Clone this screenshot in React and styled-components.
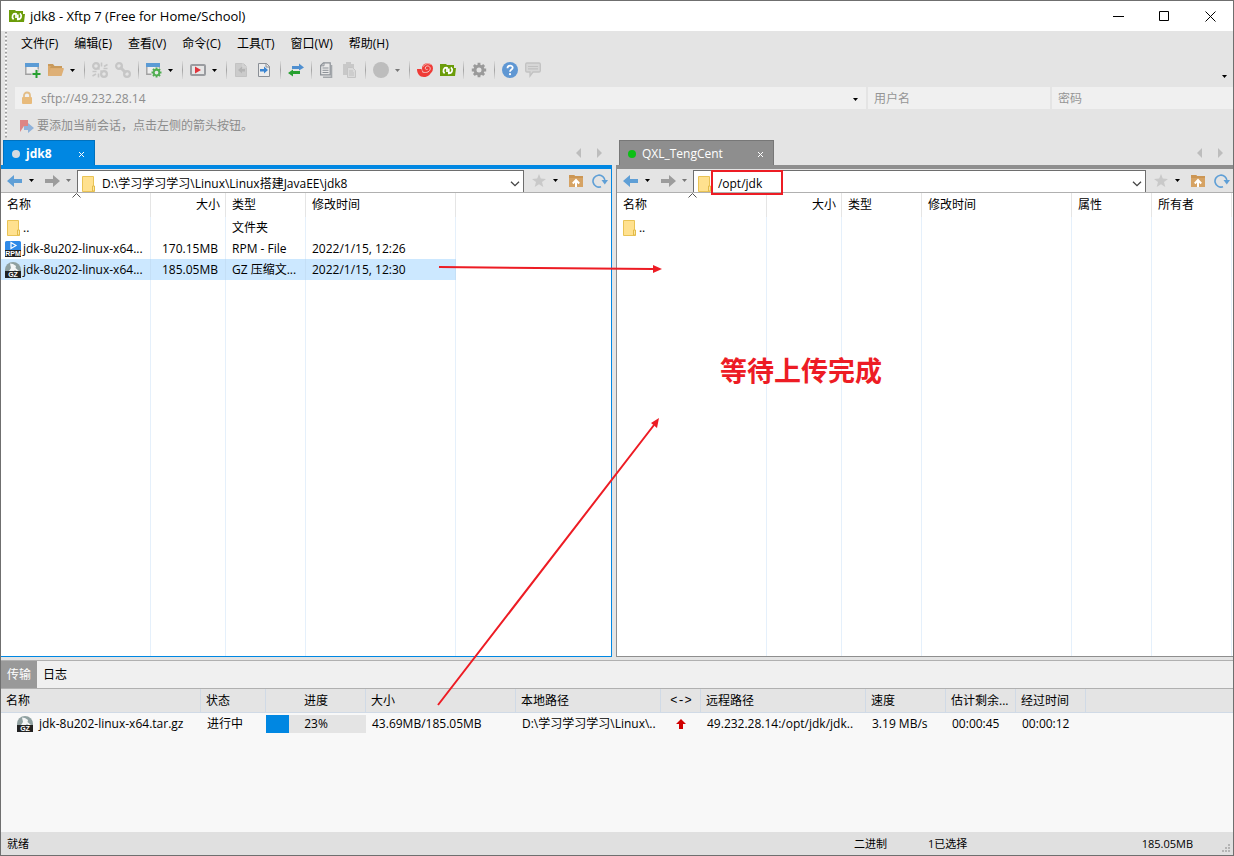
import React from "react";
import styled, { createGlobalStyle, css } from "styled-components";

const Global = createGlobalStyle`
  * { box-sizing: border-box; }
  html, body { margin: 0; padding: 0; }
  body, button, input, table {
    font-family: "Open Sans", "Noto Sans CJK SC", sans-serif;
    font-size: 12px;
    line-height: 16px;
    color: #000;
  }
  button { border: 0; padding: 0; margin: 0; background: none; }
`;

const BLUE = "#0087e2";
const GRAY = "#8e8e8e";
const RED = "#ed1c24";

const Window = styled.div`
  position: relative;
  display: flex;
  flex-direction: column;
  min-height: 100vh;
  border: 1px solid #6f6f6f;
  background: #e4e4e4;
  overflow: hidden;
`;

/* ---------- title bar ---------- */
const TitleBar = styled.header`
  display: flex;
  align-items: center;
  height: 30px;
  padding-left: 8px;
  background: #fff;
`;
const Title = styled.h1`
  flex: 1;
  margin: 0 0 0 5px;
  font-size: 13px;
  font-weight: 400;
`;
const WinButton = styled.button`
  display: flex;
  align-items: center;
  justify-content: center;
  width: 46px;
  height: 30px;
`;

/* ---------- menus and tool bar ---------- */
const Controls = styled.div`
  display: flex;
  height: 109px;
`;
const Grip = styled.div`
  width: 2px;
  margin: 1px 8px 2px 4px;
  background: repeating-linear-gradient(#9f9f9f 0 1px, #c8c8c8 1px 2px, #fff 2px 3px, #e4e4e4 3px 4px);
`;
const ControlRows = styled.div`
  flex: 1;
  min-width: 0;
  display: flex;
  flex-direction: column;
`;
const MenuBar = styled.nav`
  display: flex;
  gap: 16px;
  height: 25px;
  padding-left: 6px;
  align-items: center;
`;
const MenuItem = styled.button`
  white-space: nowrap;
`;
const ToolBar = styled.div`
  display: flex;
  align-items: center;
  height: 28px;
  margin-bottom: 3px;
  padding-left: 10px;
`;
const ToolButton = styled.button`
  display: flex;
  width: ${(p) => (p.$menu ? 16 : 23)}px;
  height: 16px;
`;
const CaretButton = styled.button`
  display: flex;
  align-items: center;
  justify-content: center;
  width: ${(p) => p.$w || 17}px;
  height: 16px;
  align-self: ${(p) => (p.$low ? "flex-end" : "center")};
`;
const ToolSep = styled.span`
  width: 1px;
  height: 18px;
  margin: 0 7px 0 ${(p) => (p.$afterMenu ? 3 : 0)}px;
  background: linear-gradient(#dcdcdc, #a4a4a4 50%, #dcdcdc);
`;
const Spacer = styled.span`
  flex: 1;
`;
const LoginRow = styled.div`
  display: grid;
  grid-template-columns: minmax(0, 1fr) 182px 181px;
  gap: 2px;
  height: 22px;
`;
const Field = styled.label`
  display: flex;
  align-items: center;
  gap: 8px;
  padding: 2px 8px 0 6px;
  background: #f0f0f0;
`;
const TextInput = styled.input`
  flex: 1;
  min-width: 0;
  padding: 0;
  border: 0;
  outline: 0;
  background: transparent;
  color: ${(p) => (p.$dim ? "#8d8d8d" : "#000")};
  &::placeholder { color: #959595; opacity: 1; }
`;
const HintRow = styled.div`
  display: flex;
  align-items: center;
  gap: 3px;
  height: 31px;
  padding: 2px 0 0 5px;
  color: #8c8c8c;
`;

/* ---------- panes ---------- */
const Panes = styled.main`
  flex: 1;
  display: grid;
  grid-template-columns: minmax(0, 99fr) minmax(0, 100fr);
  column-gap: 4px;
`;
const Pane = styled.section`
  --accent: ${(p) => (p.$active ? BLUE : GRAY)};
  display: flex;
  flex-direction: column;
  min-width: 0;
`;
const TabRow = styled.div`
  display: flex;
  align-items: center;
  height: 25px;
  padding: 0 8px 0 ${(p) => (p.$edge === "left" ? 2 : 3)}px;
  gap: 10px;
`;
const SessionTab = styled.div`
  display: flex;
  align-items: center;
  width: ${(p) => p.$w}px;
  height: 25px;
  padding: 2px 9px 0 8px;
  border: 1px solid rgba(0, 0, 0, 0.16);
  border-bottom: 0;
  background: var(--accent);
  color: #fff;
`;
const TabName = styled.button`
  flex: 1;
  margin-left: 6px;
  text-align: left;
  color: #fff;
  font-weight: ${(p) => (p.$bold ? 700 : 400)};
`;
const Dot = styled.span`
  width: 8px;
  height: 8px;
  border-radius: 50%;
  background: ${(p) => p.$color};
`;
const IconButton = styled.button`
  display: flex;
  align-items: center;
  justify-content: center;
`;
const PaneBody = styled.div`
  flex: 1;
  display: flex;
  flex-direction: column;
  border: 1px solid var(--accent);
  border-top-width: 4px;
  border-left-width: ${(p) => (p.$edge === "left" ? 0 : 1)}px;
  border-right-width: ${(p) => (p.$edge === "right" ? 0 : 1)}px;
  background: #fff;
`;
const NavBar = styled.div`
  display: flex;
  align-items: center;
  height: 24px;
  padding: 0 3px 0 6px;
  background: #e4e4e4;
  border-bottom: 1px solid #b0b0b0;
`;
const NavButtons = styled.div`
  display: flex;
  align-items: center;
`;
const NavGap = styled.span`
  width: ${(p) => p.$w}px;
`;
const PathBox = styled.label`
  flex: 1;
  min-width: 0;
  align-self: stretch;
  display: flex;
  align-items: center;
  gap: 6px;
  margin: 1px 8px 0 0;
  padding: 4px 3px 0 4px;
  border: 1px solid #6e6e6e;
  border-bottom: 0;
  background: #fff;
`;
const FileArea = styled.div`
  flex: 1;
  position: relative;
  overflow: hidden;
  background: ${(p) => p.$lines};
`;
const FileTable = styled.table`
  width: ${(p) => p.$w}px;
  table-layout: fixed;
  border-collapse: separate;
  border-spacing: 0;
`;
const Th = styled.th`
  height: 24px;
  padding: 0 5px 0 6px;
  border-right: 1px solid #e5e5e5;
  font-weight: 400;
  text-align: ${(p) => p.$align || "left"};
  white-space: nowrap;
`;
const Td = styled.td`
  height: 21px;
  padding: 0 7px 0 6px;
  border-right: 1px solid #e5f0fb;
  text-align: ${(p) => p.$align || "left"};
  white-space: nowrap;
  overflow: hidden;
`;
const FileRow = styled.tr`
  ${(p) => p.$selected && css`
    background: #cce8ff;
    ${Td} { border-color: #c4dff6; }
  `}
`;
const NameCell = styled(Td)`
  padding: 0 0 0 4px;
`;
const FileName = styled.div`
  display: flex;
  align-items: center;
  gap: 2px;
`;
const SortMark = styled.svg`
  position: absolute;
  top: 0;
  left: 71px;
`;

/* ---------- transfer panel ---------- */
const Transfers = styled.section`
  margin-top: 3px;
  border-top: 1px solid #b0b0b0;
  background: #f8f8f8;
  height: 172px;
`;
const TransferTabs = styled.div`
  display: flex;
  height: 28px;
  background: #f0f0f0;
  border-bottom: 1px solid #b0b0b0;
`;
const TransferTab = styled.button`
  width: 36px;
  height: 27px;
  color: ${(p) => (p.$active ? "#fff" : "#000")};
  background: ${(p) => (p.$active ? "#999" : "transparent")};
`;
const TransferTable = styled.table`
  width: 100%;
  table-layout: fixed;
  border-collapse: separate;
  border-spacing: 0;
`;
const TransferTh = styled.th`
  height: 24px;
  padding: 0 4px 0 5px;
  background: #e4e4e4;
  border-right: ${(p) => (p.$last ? 0 : 1)}px solid #d0dae6;
  border-bottom: 1px solid #d0dae6;
  font-weight: 400;
  text-align: ${(p) => p.$align || "left"};
  white-space: nowrap;
`;
const Mono = styled.span`
  font-family: "Liberation Mono", monospace;
`;
const TransferTd = styled.td`
  height: 22px;
  padding: 0 0 0 ${(p) => (p.$pad === undefined ? 6 : p.$pad)}px;
  text-align: ${(p) => p.$align || "left"};
  white-space: nowrap;
  overflow: hidden;
`;
const TransferName = styled.div`
  display: flex;
  align-items: center;
  gap: 6px;
`;
const Bar = styled.div`
  height: 18px;
  line-height: 18px;
  text-align: center;
  background: linear-gradient(${BLUE}, ${BLUE}) 0 0 / ${(p) => p.$value}% 100% no-repeat #e4e4e4;
`;
const CenterSvg = styled.svg`
  display: block;
  margin: 0 auto;
`;

const StatusBar = styled.footer`
  display: grid;
  grid-template-columns: minmax(0, 1fr) 74px 160px 105px 40px;
  align-items: center;
  height: 23px;
  padding-left: 6px;
  background: #e0e0e0;
  font-size: 11px;
`;
const StatusItem = styled.span`
  text-align: ${(p) => p.$align || "left"};
`;

/* ---------- annotations ---------- */
const Marks = styled.svg`
  position: absolute;
  inset: 0;
  pointer-events: none;
`;
const Note = styled.strong`
  position: absolute;
  left: 719px;
  top: 350px;
  color: ${RED};
  font-size: 27px;
  line-height: 40px;
  font-weight: 700;
`;

/* ---------- drawings ---------- */
const Svg = ({ w = 16, h = 16, children, ...rest }) => (
  <svg width={w} height={h} viewBox={`0 0 ${w} ${h}`} fill="none" aria-hidden="true" {...rest}>
    {children}
  </svg>
);
const Caret = ({ color = "#000" }) => (
  <Svg w={5} h={3}><path d="M0 0h5L2.500 3z" fill={color} /></Svg>
);
const XftpIcon = () => (
  <Svg>
    <path d="M0 2h6l1 1h7v3h2l-1 8H0z" fill="#6b9c0a" />
    <path d="M4.600 11.300C2.200 9 3.600 5.200 7 5.800V10M8.800 6.500v4.800C12.400 11.300 13.200 7.300 10.900 5.300" stroke="#fff" strokeWidth="1.700" />
  </Svg>
);
const NewIcon = () => (
  <Svg>
    <path d="M.8 1.800h12.400v10.400H.8z" fill="#eee" stroke="#a0a0a0" strokeWidth="1.400" />
    <path d="M0 1h14v4H0z" fill="#5b9bd5" />
    <path d="M11.500 7v9M6.500 11.700h9" stroke="#e4e4e4" strokeWidth="4" />
    <path d="M11.500 8v8M7.500 12h8" stroke="#27a030" strokeWidth="2" />
  </Svg>
);
const OpenIcon = () => (
  <Svg>
    <path d="M0 2h5l1.500 2H14v3H0z" fill="#c99a5b" />
    <path d="M0 14V4h3l-1 2h13.500L13 14z" fill="#dcaa6b" />
    <path d="M3 6.500h13L13.500 14H0z" fill="#deb077" />
  </Svg>
);
const LinkIcon = ({ broken }) => (
  <Svg>
    <g stroke="#c6c6c6" strokeWidth="2.200">
      <circle cx="4" cy="4" r="2.900" />
      <circle cx="12" cy="12" r="2.900" />
      {broken ? (
        <path d="M5.500 5.500l2 2M8.500 8.500l2 2M9.500.5v4M15.500 2.500l-3.500 2M15.500 6.500h-4M.5 9.500h4M.5 14l3.500-2M6.500 15.500v-4" strokeWidth="1.600" />
      ) : (
        <path d="M5 5l6 6" strokeWidth="3" />
      )}
    </g>
  </Svg>
);
const cog = "M8 .8v14.400M.8 8h14.400M2.900 2.900l10.200 10.200M13.100 2.900L2.900 13.100";
const PropIcon = () => (
  <Svg>
    <path d="M.8 1.800h12.400v10.400H.8z" fill="#eee" stroke="#a0a0a0" strokeWidth="1.400" />
    <path d="M0 1h14v4H0z" fill="#5b9bd5" />
    <circle cx="10.500" cy="10.500" r="5.500" fill="#e4e4e4" />
    <g transform="translate(5 5) scale(.69)">
      <path d={cog} stroke="#4fae50" strokeWidth="2.800" />
      <circle cx="8" cy="8" r="4" fill="#e9e9e9" stroke="#4fae50" strokeWidth="2.600" />
    </g>
  </Svg>
);
const PlayIcon = () => (
  <Svg>
    <rect x="1" y="3" width="14" height="10" rx="1" fill="#e6e6e6" stroke="#9a9ca0" strokeWidth="2" />
    <path d="M5 4.500L11 8l-6 3.500z" fill="#e0343c" />
  </Svg>
);
const DocIcon = ({ on }) => (
  <Svg>
    <path d="M1.500 1.500h8l3 3v10h-11z" fill={on ? "#ececec" : "#cbcbcb"} stroke={on ? "#8a8f96" : "#c3c3c3"} />
    <path d="M9 1v4h4" stroke={on ? "#8a8f96" : "#d8d8d8"} />
    {on ? <path d="M3 7h4V4.500L11 8l-4 3.500V9.500H3z" fill="#3c86d2" /> : <path d="M11 7H8V4.500L4 8l4 3.500V9.500h3z" fill="#b4b4b4" />}
  </Svg>
);
const SwapIcon = () => (
  <Svg>
    <path d="M4 4h7V1.500L16 5.500l-5 3V7H4z" fill="#4f8fd0" />
    <path d="M12 9H5V7.500L0 11l5 3.500V12h7z" fill="#27a030" />
  </Svg>
);
const CopyIcon = () => (
  <Svg>
    <path d="M4 15.200h8.500V3" stroke="#a3a7ab" strokeWidth="1.600" />
    <path d="M4.500.8h6.700v12H1.600V3.600z" fill="#e8e8e8" stroke="#8d9298" strokeWidth="1.200" />
    <path d="M5 .8v3H2M3.500 6h6M3.500 8.300h6M3.500 10.500h6" stroke="#8d9298" />
  </Svg>
);
const PasteIcon = () => (
  <Svg>
    <path d="M1 2h3V0h5v2h3v11H1z" fill="#c8c8c8" />
    <path d="M5.500 5.500h5l3 3v7h-8z" fill="#dadada" stroke="#c4c4c4" />
    <path d="M7 9h4M7 11h5M7 13h5" stroke="#c0c0c0" />
  </Svg>
);
const DiscIcon = () => <Svg><circle cx="8" cy="8" r="8" fill="#bdbdbd" /></Svg>;
const ShellIcon = () => (
  <Svg>
    <path d="M0 7h4.500c0 2.500 2 3.500 4 3L14 9c0 3.500-3 6-7 6-4.500 0-7-3.500-7-8z" fill="#ef3b36" />
    <circle cx="10.500" cy="6.500" r="5.500" fill="#ef3b36" />
    <path d="M5 9.500c2.500 2 7.500 1 8.200-2.300C13.600 4 10 3 8.600 5c-1 1.800.6 3.200 2 2.300M13.500 2.500c-2-1.500-6-1-7 2" stroke="#f6c9c6" />
  </Svg>
);
const CogIcon = () => (
  <Svg>
    <path d={cog} stroke="#9a9a9a" strokeWidth="2.800" />
    <circle cx="8" cy="8" r="4" fill="#e4e4e4" stroke="#9a9a9a" strokeWidth="3" />
  </Svg>
);
const HelpIcon = () => (
  <Svg>
    <circle cx="8" cy="8" r="8" fill="#5f97d3" />
    <path d="M5.500 6.200c0-3.400 5.200-3.400 5.200-.4C10.700 7.600 8 7.500 8 9.800" stroke="#fff" strokeWidth="1.800" />
    <circle cx="8" cy="12.200" r="1.100" fill="#fff" />
  </Svg>
);
const ChatIcon = () => (
  <Svg>
    <path d="M2 1h12a1.300 1.300 0 0 1 1.300 1.300v6.400A1.300 1.300 0 0 1 14 10H8l-3 4v-4H2A1.300 1.300 0 0 1 .7 8.700V2.300A1.300 1.300 0 0 1 2 1z" fill="#d6d6d6" stroke="#c2c2c2" strokeWidth="1.300" />
    <path d="M3 4.500h10M3 6.800h10" stroke="#c0c0c0" strokeWidth="1.200" />
  </Svg>
);
const LockIcon = () => (
  <Svg w={12}>
    <path d="M3 6V4.500a3 3 0 0 1 6 0V6" stroke="#e3bd86" strokeWidth="1.800" />
    <rect x="1" y="6" width="10" height="7" rx="1" fill="#e8bb7c" />
  </Svg>
);
const FlagIcon = () => (
  <Svg w={14}>
    <path d="M0 2h8v7L4 8 0 14z" fill="#dd8585" />
    <path d="M4 8h4V5l6 5-6 5v-3H4z" fill="#8fb2da" />
  </Svg>
);
const folderArt = (
  <>
    <path d="M.5.5h11v10h1v5H.5z" fill="#ffe18f" stroke="#e9c355" />
    <path d="M10.500 15v-5h2v5z" fill="#fbe7a4" stroke="#e3bb48" />
  </>
);
const FolderIcon = () => <Svg w={14}>{folderArt}</Svg>;
const RowFolderIcon = () => (
  <Svg><g transform="translate(2 0)">{folderArt}</g></Svg>
);
const badgeText = { fontFamily: "Liberation Sans, sans-serif", fontWeight: 700, fontSize: 7 };
const RpmIcon = () => (
  <Svg>
    <path d="M0 1.500A1.500 1.500 0 0 1 1.500 0h13A1.500 1.500 0 0 1 16 1.500V9H0z" fill="#2f8ae8" />
    <path d="M6 1.500L11 4.500 6 7.500z" stroke="#fff" strokeWidth="1.200" />
    <rect y="9" width="16" height="7" fill="#222" />
    <text x="8" y="15" fill="#fff" textAnchor="middle" style={badgeText}>RPM</text>
  </Svg>
);
const GzIcon = () => (
  <Svg>
    <path d="M0 9V8a8 8 0 0 1 16 0v1z" fill="#8fa0a0" />
    <path d="M5 1.500l3 .5 3 2-.5 2L14 9h-3l-1-1-1 1H4l2-3z" fill="#f4f6f6" />
    <rect y="9" width="16" height="7" fill="#222" />
    <text x="8" y="15" fill="#fff" textAnchor="middle" style={badgeText}>GZ</text>
  </Svg>
);
const ArrowIcon = ({ forward }) => (
  <Svg w={15} h={12}>
    {forward
      ? <path d="M0 4h8V0l7 6-7 6V8H0z" fill="#9c9c9c" />
      : <path d="M15 4H7V0L0 6l7 6V8h8z" fill="#5f9fd6" />}
  </Svg>
);
const StarIcon = () => <Svg w={14} h={13}><path d="M7 0l1.800 4.600L14 5l-4 3 1.300 5L7 10.200 2.700 13 4 8 0 5l5.200-.4z" fill="#c9c9c9" /></Svg>;
const UpIcon = () => (
  <Svg w={14} h={13}>
    <path d="M0 1h5l1 1h8v11H0z" fill="#d6a364" />
    <path d="M0 1h5l1 1h8v2H0z" fill="#cc9654" />
    <path d="M7 13V7M3.800 9.500L7 6l3.200 3.500" stroke="#fff" strokeWidth="2" />
  </Svg>
);
const RefreshIcon = () => (
  <Svg w={16} h={14}>
    <path d="M9 12.800A6 6 0 1 1 13 7" stroke="#5f9fd6" strokeWidth="1.600" />
    <path d="M9.500 6H16l-3.200 4.500z" fill="#5f9fd6" />
  </Svg>
);
const DownIcon = () => <Svg w={10} h={6}><path d="M1 .7l4 4 4-4" stroke="#444" strokeWidth="1.300" /></Svg>;
const CloseMini = () => <Svg w={7} h={7}><path d="M1 1l5 5M6 1L1 6" stroke="#fff" /></Svg>;

const fileIcons = {
  folder: <RowFolderIcon />,
  rpm: <RpmIcon />,
  gz: <GzIcon />,
};

/* ---------- data ---------- */
const menus = ["文件(F)", "编辑(E)", "查看(V)", "命令(C)", "工具(T)", "窗口(W)", "帮助(H)"];

const toolGroups = [
  [{ label: "新建", icon: <NewIcon /> }, { label: "打开", icon: <OpenIcon />, menu: "#000" }],
  [{ label: "断开", icon: <LinkIcon broken /> }, { label: "重新连接", icon: <LinkIcon /> }],
  [{ label: "属性", icon: <PropIcon />, menu: "#000" }],
  [{ label: "终端", icon: <PlayIcon />, menu: "#000" }],
  [{ label: "接收", icon: <DocIcon /> }, { label: "发送", icon: <DocIcon on /> }],
  [{ label: "同步", icon: <SwapIcon /> }],
  [{ label: "复制", icon: <CopyIcon /> }, { label: "粘贴", icon: <PasteIcon /> }],
  [{ label: "停止", icon: <DiscIcon />, menu: "#777" }],
  [{ label: "Xshell", icon: <ShellIcon /> }, { label: "Xftp", icon: <XftpIcon /> }],
  [{ label: "选项", icon: <CogIcon /> }],
  [{ label: "帮助", icon: <HelpIcon /> }, { label: "反馈", icon: <ChatIcon /> }],
];

const localColumns = [
  { name: "名称", w: 150 },
  { name: "大小", w: 75, align: "right" },
  { name: "类型", w: 80 },
  { name: "修改时间", w: 150 },
];
const remoteColumns = [...localColumns, { name: "属性", w: 80 }, { name: "所有者", w: 80 }];

const localFiles = [
  { icon: "folder", name: "..", size: "", type: "文件夹", time: "" },
  { icon: "rpm", name: "jdk-8u202-linux-x64...", size: "170.15MB", type: "RPM - File", time: "2022/1/15, 12:26" },
  { icon: "gz", name: "jdk-8u202-linux-x64...", size: "185.05MB", type: "GZ 压缩文...", time: "2022/1/15, 12:30", selected: true },
];
const remoteFiles = [{ icon: "folder", name: "..", size: "", type: "", time: "" }];

const transferColumns = [
  ["名称", 200], ["状态", 65], ["进度", 100, "center"], ["大小", 150], ["本地路径", 145],
  ["<->", 40, "center"], ["远程路径", 165], ["速度", 80], ["估计剩余...", 70], ["经过时间", 70], ["", null],
];

function columnLines(columns) {
  let x = 0;
  return columns
    .map((c) => {
      x += c.w;
      return `linear-gradient(#e5f0fb, #e5f0fb) ${x - 1}px 0 / 1px 100% no-repeat`;
    })
    .join(", ");
}

function FilePane({ edge, active, tab, path, columns, files }) {
  const width = columns.reduce((sum, c) => sum + c.w, 0);
  return (
    <Pane $active={active}>
      <TabRow $edge={edge}>
        <SessionTab $w={tab.w}>
          <Dot $color={tab.dot} />
          <TabName $bold={active}>{tab.name}</TabName>
          <IconButton aria-label="关闭"><CloseMini /></IconButton>
        </SessionTab>
        <Spacer />
        <IconButton aria-label="上一个"><Svg w={10} h={10}><path d="M7 0v10L2 5z" fill="#bdbdbd" /></Svg></IconButton>
        <IconButton aria-label="下一个"><Svg w={10} h={10}><path d="M3 0v10l5-5z" fill="#bdbdbd" /></Svg></IconButton>
      </TabRow>
      <PaneBody $edge={edge}>
        <NavBar>
          <NavButtons>
            <IconButton aria-label="后退"><ArrowIcon /></IconButton>
            <CaretButton $w={19} aria-label="后退历史"><Caret /></CaretButton>
            <NavGap $w={4} />
            <IconButton aria-label="前进"><ArrowIcon forward /></IconButton>
            <CaretButton aria-label="前进历史"><Caret color="#777" /></CaretButton>
          </NavButtons>
          <PathBox>
            <FolderIcon />
            <TextInput aria-label="路径" defaultValue={path} />
            <DownIcon />
          </PathBox>
          <NavButtons>
            <IconButton aria-label="收藏"><StarIcon /></IconButton>
            <CaretButton $w={19} aria-label="收藏列表"><Caret /></CaretButton>
            <NavGap $w={4} />
            <IconButton aria-label="上级目录"><UpIcon /></IconButton>
            <NavGap $w={9} />
            <IconButton aria-label="刷新"><RefreshIcon /></IconButton>
          </NavButtons>
        </NavBar>
        <FileArea $lines={columnLines(columns)}>
          <SortMark width="9" height="6" viewBox="0 0 9 6" fill="none" aria-hidden="true">
            <path d="M.5 4.500l4-4 4 4" stroke="#555" />
          </SortMark>
          <FileTable $w={width}>
            <colgroup>{columns.map((c) => <col key={c.name} width={c.w} />)}</colgroup>
            <thead>
              <tr>{columns.map((c) => <Th key={c.name} $align={c.align}>{c.name}</Th>)}</tr>
            </thead>
            <tbody>
              {files.map((f) => (
                <FileRow key={f.icon} $selected={f.selected}>
                  <NameCell>
                    <FileName>{fileIcons[f.icon]}{f.name}</FileName>
                  </NameCell>
                  <Td $align="right">{f.size}</Td>
                  <Td>{f.type}</Td>
                  <Td>{f.time}</Td>
                  {columns.slice(4).map((c) => <Td key={c.name} />)}
                </FileRow>
              ))}
            </tbody>
          </FileTable>
        </FileArea>
      </PaneBody>
    </Pane>
  );
}

export default function App() {
  return (
    <Window>
      <Global />
      <TitleBar>
        <XftpIcon />
        <Title>jdk8 - Xftp 7 (Free for Home/School)</Title>
        <WinButton aria-label="最小化"><Svg w={11} h={11}><path d="M0 5.500h11" stroke="#000" /></Svg></WinButton>
        <WinButton aria-label="最大化"><Svg w={11} h={11}><path d="M.5.5h9v9h-9z" stroke="#000" /></Svg></WinButton>
        <WinButton aria-label="关闭"><Svg w={11} h={11}><path d="M.5.5l10 10M10.500.5l-10 10" stroke="#000" /></Svg></WinButton>
      </TitleBar>

      <Controls>
        <Grip />
        <ControlRows>
          <MenuBar>{menus.map((m) => <MenuItem key={m}>{m}</MenuItem>)}</MenuBar>
          <ToolBar>
            {toolGroups.map((group, i) => (
              <React.Fragment key={group[0].label}>
                {i > 0 && <ToolSep $afterMenu={Boolean(toolGroups[i - 1].at(-1).menu)} />}
                {group.map((t) => (
                  <React.Fragment key={t.label}>
                    <ToolButton aria-label={t.label} $menu={Boolean(t.menu)}>{t.icon}</ToolButton>
                    {t.menu && <CaretButton aria-label={`${t.label}菜单`}><Caret color={t.menu} /></CaretButton>}
                  </React.Fragment>
                ))}
              </React.Fragment>
            ))}
            <Spacer />
            <CaretButton $low aria-label="更多按钮"><Caret /></CaretButton>
          </ToolBar>
          <LoginRow>
            <Field>
              <LockIcon />
              <TextInput $dim aria-label="主机" defaultValue="sftp://49.232.28.14" />
              <Caret />
            </Field>
            <Field><TextInput aria-label="用户名" placeholder="用户名" /></Field>
            <Field><TextInput aria-label="密码" type="password" placeholder="密码" /></Field>
          </LoginRow>
          <HintRow><FlagIcon />要添加当前会话，点击左侧的箭头按钮。</HintRow>
        </ControlRows>
      </Controls>

      <Panes>
        <FilePane
          edge="left"
          active
          tab={{ name: "jdk8", dot: "#d5dbe0", w: 92 }}
          path="D:\学习学习学习\Linux\Linux搭建JavaEE\jdk8"
          columns={localColumns}
          files={localFiles}
        />
        <FilePane
          edge="right"
          tab={{ name: "QXL_TengCent", dot: "#0bbf14", w: 155 }}
          path="/opt/jdk"
          columns={remoteColumns}
          files={remoteFiles}
        />
      </Panes>

      <Transfers>
        <TransferTabs>
          <TransferTab $active>传输</TransferTab>
          <TransferTab>日志</TransferTab>
        </TransferTabs>
        <TransferTable>
          <colgroup>{transferColumns.map(([name, w]) => <col key={name} width={w || undefined} />)}</colgroup>
          <thead>
            <tr>
              {transferColumns.map(([name, w, align]) => (
                <TransferTh key={name} $align={align} $last={!w}>
                  {name === "<->" ? <Mono>{name}</Mono> : name}
                </TransferTh>
              ))}
            </tr>
          </thead>
          <tbody>
            <tr>
              <TransferTd $pad={16}>
                <TransferName><GzIcon />jdk-8u202-linux-x64.tar.gz</TransferName>
              </TransferTd>
              <TransferTd>进行中</TransferTd>
              <TransferTd $pad={0}><Bar $value={23}>23%</Bar></TransferTd>
              <TransferTd>43.69MB/185.05MB</TransferTd>
              <TransferTd>D:\学习学习学习\Linux\..</TransferTd>
              <TransferTd $pad={0}>
                <CenterSvg width="10" height="10" viewBox="0 0 10 10" aria-hidden="true">
                  <path d="M5 0l5 5H7v5H3V5H0z" fill="#d00000" />
                </CenterSvg>
              </TransferTd>
              <TransferTd>49.232.28.14:/opt/jdk/jdk..</TransferTd>
              <TransferTd>3.19 MB/s</TransferTd>
              <TransferTd>00:00:45</TransferTd>
              <TransferTd>00:00:12</TransferTd>
              <TransferTd />
            </tr>
          </tbody>
        </TransferTable>
      </Transfers>

      <StatusBar>
        <StatusItem>就绪</StatusItem>
        <StatusItem>二进制</StatusItem>
        <StatusItem>1已选择</StatusItem>
        <StatusItem $align="right">185.05MB</StatusItem>
        <Svg w={40} h={20}>
          <path d="M35 10h2v2h-2zM32 13h2v2h-2zM35 13h2v2h-2zM29 16h2v2h-2zM32 16h2v2h-2zM35 16h2v2h-2z" fill="#b4b4b4" />
        </Svg>
      </StatusBar>

      <Marks width="1232" height="854" viewBox="1 1 1232 854" fill="none" aria-hidden="true">
        <path d="M439 267l214 2M438 705l216-280" stroke={RED} strokeWidth="2" />
        <path d="M662 269l-9-4v8zM659 418l-8 5 6 5z" fill={RED} />
        <path d="M712 171h70v23h-70z" stroke={RED} strokeWidth="2" />
      </Marks>
      <Note>等待上传完成</Note>
    </Window>
  );
}
